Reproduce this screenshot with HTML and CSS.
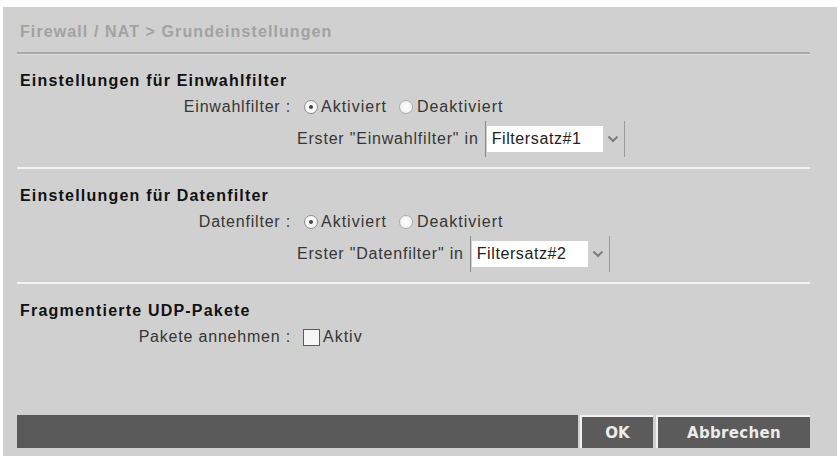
FILE: index.html
```html
<!DOCTYPE html>
<html lang="de">
<head>
<meta charset="utf-8">
<title>Firewall / NAT &gt; Grundeinstellungen</title>
<link rel="stylesheet" href="styles.css">
</head>
<body>
<div class="panel">
  <div class="title">Firewall / NAT &gt; Grundeinstellungen</div>

  <section class="section">
    <h2 class="heading">Einstellungen für Einwahlfilter</h2>
    <div class="row">
      <span class="label">Einwahlfilter :</span>
      <span class="radio on"></span><span class="opt">Aktiviert</span>
      <span class="radio"></span><span class="opt">Deaktiviert</span>
    </div>
    <div class="sub">
      <span class="subtext">Erster "Einwahlfilter" in</span>
      <span class="select"><span class="field">Filtersatz#1</span><span class="arrow"><svg width="12" height="8" viewBox="0 0 12 8"><path d="M1.5 1.5 L6 6 L10.5 1.5" fill="none" stroke="#7c7c7c" stroke-width="2"/></svg></span></span>
    </div>
  </section>

  <section class="section">
    <h2 class="heading">Einstellungen für Datenfilter</h2>
    <div class="row">
      <span class="label">Datenfilter :</span>
      <span class="radio on"></span><span class="opt">Aktiviert</span>
      <span class="radio"></span><span class="opt">Deaktiviert</span>
    </div>
    <div class="sub">
      <span class="subtext">Erster "Datenfilter" in</span>
      <span class="select"><span class="field">Filtersatz#2</span><span class="arrow"><svg width="12" height="8" viewBox="0 0 12 8"><path d="M1.5 1.5 L6 6 L10.5 1.5" fill="none" stroke="#7c7c7c" stroke-width="2"/></svg></span></span>
    </div>
  </section>

  <section class="section last">
    <h2 class="heading">Fragmentierte UDP-Pakete</h2>
    <div class="row">
      <span class="label">Pakete annehmen :</span>
      <span class="check"></span><span class="opt">Aktiv</span>
    </div>
  </section>

  <div class="bar">
    <div class="bar-fill"></div>
    <button class="btn ok" type="button">OK</button>
    <button class="btn cancel" type="button">Abbrechen</button>
  </div>
</div>
</body>
</html>
```
FILE: styles.css
```css
html, body {
  margin: 0;
  padding: 0;
  background: #ffffff;
}

body {
  font-family: "Liberation Sans", Arial, sans-serif;
  width: 837px;
  height: 456px;
  overflow: hidden;
}

.panel {
  margin: 7px 0 0 3px;
  height: 449px;
  box-sizing: border-box;
  background: #d0d0d0;
  padding: 0 27px 8px 14px;
  display: flex;
  flex-direction: column;
}

.title {
  padding: 15px 0 10px 3px;
  line-height: 20px;
  font-size: 16px;
  font-weight: bold;
  letter-spacing: 1.1px;
  color: #a2a2a2;
  border-bottom: 2px solid #a9a9a9;
  box-shadow: 0 1px 0 #dedede;
}

.section {
  padding: 17px 0 11px 0;
  border-bottom: 2px solid #f3f3f3;
}

.section.last {
  border-bottom: none;
}

.heading {
  margin: 0 0 2px 0;
  padding-left: 3px;
  font-size: 16px;
  line-height: 20px;
  font-weight: bold;
  letter-spacing: 1.2px;
  color: #111111;
}

.row {
  display: flex;
  align-items: center;
  height: 28px;
  font-size: 16px;
  letter-spacing: 0.8px;
  color: #363636;
}

.label {
  width: 274px;
  text-align: right;
  flex: none;
}

.opt {
  letter-spacing: 1px;
}

.radio {
  flex: none;
  box-sizing: border-box;
  width: 14px;
  height: 14px;
  border-radius: 50%;
  border: 1px solid #8d8d8d;
  background: #f7f7f7;
  margin: 0 3px 0 13px;
  display: flex;
  align-items: center;
  justify-content: center;
}

.radio.on::after {
  content: "";
  width: 4px;
  height: 4px;
  border-radius: 50%;
  background: #444444;
}

.radio:not(.on) {
  margin-left: 12px;
  margin-right: 4px;
  border-color: #adadad;
  background: radial-gradient(circle at 50% 50%, #ffffff 0%, #ececec 100%);
}

.check {
  flex: none;
  box-sizing: border-box;
  width: 17px;
  height: 17px;
  border: 1px solid #5a5a5a;
  background: #f6f6f6;
  margin: 0 3px 0 12px;
}

.sub {
  display: flex;
  align-items: center;
  height: 34px;
  margin-top: 1px;
  padding-left: 280px;
  font-size: 16px;
  letter-spacing: 0.8px;
  color: #363636;
}

.subtext {
  margin-right: 6px;
}

.select {
  display: flex;
  align-items: center;
  height: 36px;
  box-sizing: border-box;
  padding-left: 1px;
  border-left: 1px solid #8a8a8a;
  border-right: 1px solid #9a9a9a;
}

.field {
  width: 116px;
  height: 26px;
  box-sizing: border-box;
  background: #ffffff;
  padding-left: 5px;
  line-height: 26px;
  color: #222222;
  letter-spacing: 0.6px;
}

.arrow {
  width: 21px;
  display: flex;
  justify-content: center;
  align-items: center;
}

.arrow svg {
  display: block;
}

.bar {
  margin-top: auto;
  display: flex;
  height: 33px;
}

.bar-fill {
  flex: 1;
  background: #595959;
  margin-right: 2px;
}

.btn {
  margin: 0;
  height: 33px;
  box-sizing: border-box;
  background: #5b5b5b;
  border: none;
  border-top: 2px solid #f2f2f2;
  border-left: 2px solid #f2f2f2;
  color: #ececec;
  font-family: "DejaVu Sans", Verdana, sans-serif;
  font-weight: bold;
  font-size: 15px;
  padding: 0;
  text-align: center;
}

.ok {
  width: 73px;
  margin-right: 3px;
}

.cancel {
  width: 154px;
  letter-spacing: 0.3px;
}
```
